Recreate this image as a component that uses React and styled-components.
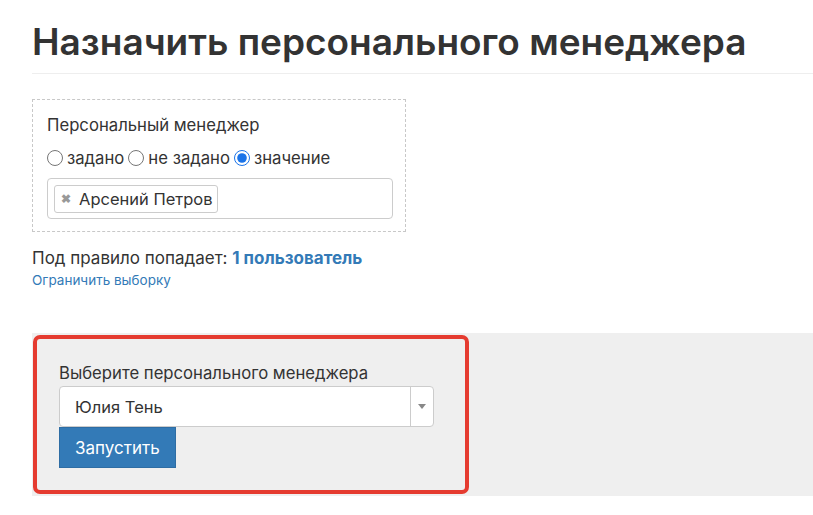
import styled, { createGlobalStyle } from "styled-components";

const GlobalStyle = createGlobalStyle`
  body {
    margin: 0;
    background: #fff;
    font-family: Inter, "Noto Sans", sans-serif;
    color: #333;
  }
`;

const Page = styled.div`
  padding: 19px 0 0 32px;
`;

const Title = styled.h1`
  margin: 0;
  padding-bottom: 8px;
  font-size: 37px;
  font-weight: 600;
  line-height: 46px;
  border-bottom: 1px solid #eee;
`;

const FilterBox = styled.div`
  width: 346px;
  margin-top: 25px;
  padding: 14px 12px 12px 14px;
  border: 1px dashed #c8c8c8;
`;

const Label = styled.div`
  font-size: 16.7px;
  line-height: 22px;
`;

const RadioRow = styled.div`
  display: flex;
  align-items: center;
  gap: 4px;
  margin-top: 11px;
  font-size: 16.7px;
  line-height: 22px;
`;

const RadioLabel = styled.label`
  display: flex;
  align-items: center;
  gap: 4px;
`;

const Radio = styled.input`
  margin: 0;
  width: 16px;
  height: 16px;
  accent-color: #1a73e8;
`;

const TagInput = styled.div`
  margin-top: 9px;
  height: 41px;
  padding: 5px 6px;
  box-sizing: border-box;
  border: 1px solid #ccc;
  border-radius: 4px;
  display: flex;
  align-items: center;
`;

const Tag = styled.span`
  display: inline-flex;
  align-items: center;
  gap: 8px;
  height: 28px;
  padding: 0 4px 0 6px;
  box-sizing: border-box;
  border: 1px solid #ccc;
  border-radius: 3px;
  font-size: 16.5px;
`;

const TagClose = styled.span`
  color: #999;
  font-size: 12px;
  font-weight: 700;
  line-height: 1;
`;

const Summary = styled.div`
  margin-top: 15px;
  font-size: 17px;
  line-height: 22px;
`;

const Strong = styled.b`
  color: #337ab7;
  font-weight: 700;
`;

const SmallLink = styled.a`
  display: block;
  margin-top: 1px;
  font-size: 13.5px;
  line-height: 20px;
  color: #337ab7;
  text-decoration: none;
`;

const Panel = styled.div`
  margin-top: 43px;
  background: #efefef;
  padding: 2px 0 2px 1px;
`;

const Highlight = styled.div`
  width: 436px;
  box-sizing: border-box;
  border: 4px solid #e53b30;
  border-radius: 7px;
  padding: 23px 22px 22px;
`;

const Select = styled.div`
  margin-top: 2px;
  width: 375px;
  height: 41px;
  box-sizing: border-box;
  background: #fff;
  border: 1px solid #ccc;
  border-radius: 4px;
  display: flex;
  align-items: center;
  font-size: 16.5px;
`;

const SelectValue = styled.div`
  flex: 1;
  padding-left: 15px;
`;

const SelectArrow = styled.div`
  width: 22px;
  height: 100%;
  border-left: 1px solid #ccc;
  display: flex;
  align-items: center;
  justify-content: center;
  &::after {
    content: "";
    border-left: 4px solid transparent;
    border-right: 4px solid transparent;
    border-top: 5px solid #888;
  }
`;

const Button = styled.button`
  display: block;
  height: 41px;
  padding: 0 15px;
  border: 1px solid #2e6da4;
  border-radius: 0;
  background: #337ab7;
  color: #fff;
  font-family: inherit;
  font-size: 17px;
`;

export default function App() {
  return (
    <>
      <GlobalStyle />
      <Page>
        <Title>Назначить персонального менеджера</Title>
        <FilterBox>
          <Label>Персональный менеджер</Label>
          <RadioRow>
            <RadioLabel>
              <Radio type="radio" name="m" />
              задано
            </RadioLabel>
            <RadioLabel>
              <Radio type="radio" name="m" />
              не задано
            </RadioLabel>
            <RadioLabel>
              <Radio type="radio" name="m" defaultChecked />
              значение
            </RadioLabel>
          </RadioRow>
          <TagInput>
            <Tag>
              <TagClose>✖</TagClose>
              Арсений Петров
            </Tag>
          </TagInput>
        </FilterBox>
        <Summary>
          Под правило попадает: <Strong>1 пользователь</Strong>
        </Summary>
        <SmallLink href="#">Ограничить выборку</SmallLink>
        <Panel>
          <Highlight>
            <Label>Выберите персонального менеджера</Label>
            <Select>
              <SelectValue>Юлия Тень</SelectValue>
              <SelectArrow />
            </Select>
            <Button>Запустить</Button>
          </Highlight>
        </Panel>
      </Page>
    </>
  );
}
